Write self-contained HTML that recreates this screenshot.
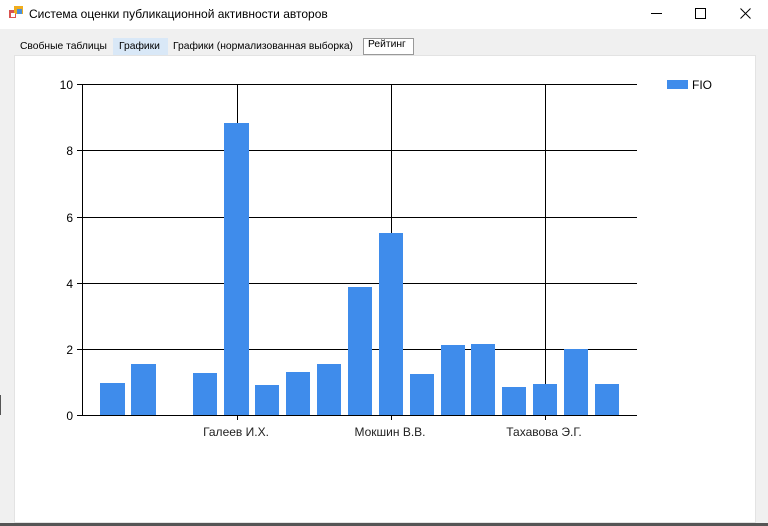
<!DOCTYPE html>
<html><head><meta charset="utf-8"><style>
body{margin:0;width:768px;height:526px;background:#f0f0f0;font-family:"Liberation Sans",sans-serif;position:relative;overflow:hidden}
.t{position:absolute;font-size:12px;color:#000;white-space:nowrap}
</style></head><body>
<div style="position:absolute;left:0;top:0;width:768px;height:29px;background:#fff"></div>
<svg style="position:absolute;left:9px;top:6px" width="16" height="14"><rect x="0" y="4" width="7" height="8" fill="#d9534f"/><rect x="5" y="0" width="9" height="8" fill="#f0ad1e"/><rect x="8" y="3" width="5" height="5" fill="#4a90d9"/><rect x="2" y="7" width="4" height="4" fill="#fff"/></svg>
<div class="t" style="left:29px;top:7px;font-size:12px">Система оценки публикационной активности авторов</div>
<div style="position:absolute;left:651px;top:13px;width:11px;height:1px;background:#000"></div>
<div style="position:absolute;left:695px;top:8px;width:9px;height:9px;border:1px solid #000"></div>
<svg style="position:absolute;left:740px;top:8px" width="11" height="11"><path d="M0.5 0.5L10.5 10.5M10.5 0.5L0.5 10.5" stroke="#000" stroke-width="1"/></svg>
<div style="position:absolute;left:0;top:395px;width:1px;height:20px;background:#555"></div>
<div style="position:absolute;left:113px;top:38px;width:55px;height:18px;background:#d9e8f7"></div>
<div class="t" style="left:20px;top:41px;font-size:10.3px">Свобные таблицы</div>
<div class="t" style="left:119px;top:41px;font-size:10.3px">Графики</div>
<div class="t" style="left:173px;top:41px;font-size:10.3px">Графики (нормализованная выборка)</div>
<div style="position:absolute;left:363px;top:38px;width:49px;height:15px;border:1px solid #999;background:#fff"></div>
<div class="t" style="left:368px;top:39px;font-size:10.3px">Рейтинг</div>
<div style="position:absolute;left:14px;top:55px;width:740px;height:466px;background:#fff;border:1px solid #e3e3e3"></div>
<div style="position:absolute;left:0;top:523px;width:768px;height:3px;background:#555"></div>
<svg style="position:absolute;left:0;top:0" width="768" height="526" font-family="Liberation Sans" font-size="12">
<g stroke="#000" stroke-width="1">
<line x1="82" y1="84.5" x2="637" y2="84.5"/><line x1="82" y1="150.5" x2="637" y2="150.5"/><line x1="82" y1="217.5" x2="637" y2="217.5"/><line x1="82" y1="283.5" x2="637" y2="283.5"/><line x1="82" y1="349.5" x2="637" y2="349.5"/>
<line x1="237.5" y1="84" x2="237.5" y2="420"/><line x1="391.5" y1="84" x2="391.5" y2="420"/><line x1="545.5" y1="84" x2="545.5" y2="420"/>
<line x1="82.5" y1="84" x2="82.5" y2="416"/><line x1="77" y1="415.5" x2="637" y2="415.5"/>
<line x1="77" y1="84.5" x2="82" y2="84.5"/><line x1="77" y1="150.5" x2="82" y2="150.5"/><line x1="77" y1="217.5" x2="82" y2="217.5"/><line x1="77" y1="283.5" x2="82" y2="283.5"/><line x1="77" y1="349.5" x2="82" y2="349.5"/>
</g>
<g fill="#3f8ceb">
<rect x="100" y="383" width="25" height="32"/><rect x="131" y="364" width="25" height="51"/><rect x="193" y="373" width="24" height="42"/><rect x="224" y="123" width="25" height="292"/><rect x="255" y="385" width="24" height="30"/><rect x="286" y="372" width="24" height="43"/><rect x="317" y="364" width="24" height="51"/><rect x="348" y="287" width="24" height="128"/><rect x="379" y="233" width="24" height="182"/><rect x="410" y="374" width="24" height="41"/><rect x="441" y="345" width="24" height="70"/><rect x="471" y="344" width="24" height="71"/><rect x="502" y="387" width="24" height="28"/><rect x="533" y="384" width="24" height="31"/><rect x="564" y="349" width="24" height="66"/><rect x="595" y="384" width="24" height="31"/>
<rect x="667" y="80" width="21" height="9"/>
</g>
<g fill="#000" text-anchor="end">
<text x="73" y="89">10</text><text x="73" y="155">8</text><text x="73" y="222">6</text><text x="73" y="288">4</text><text x="73" y="354">2</text><text x="73" y="420">0</text>
</g>
<g fill="#222" text-anchor="middle">
<text x="236" y="436">Галеев И.Х.</text><text x="390" y="436">Мокшин В.В.</text><text x="544" y="436">Тахавова Э.Г.</text>
</g>
<text x="692" y="89" fill="#000">FIO</text>
</svg>
</body></html>
